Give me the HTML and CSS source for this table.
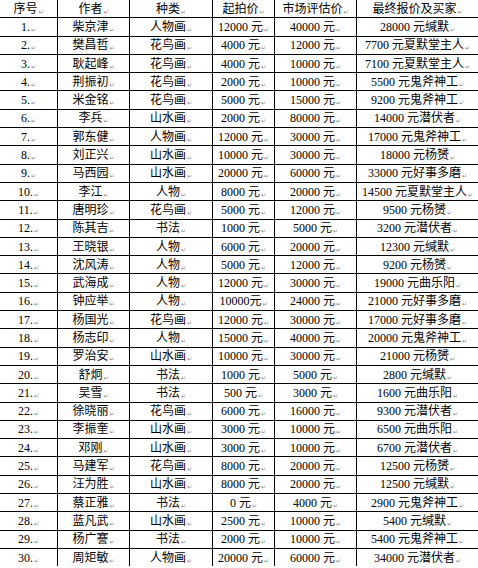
FILE: index.html
```html
<!DOCTYPE html>
<html lang="zh-CN">
<head>
<meta charset="utf-8">
<title>拍卖结果</title>
<link rel="stylesheet" href="styles.css">
</head>
<body>
<div class="sheet">
<div class="c">序号<i>↵</i></div><div class="c">作者<i>↵</i></div><div class="c">种类<i>↵</i></div><div class="c">起拍价<i>↵</i></div><div class="c">市场评估价<i>↵</i></div><div class="c">最终报价及买家<i>↵</i></div>
<div class="c">1.<i>↵</i></div><div class="c">柴京津<i>↵</i></div><div class="c">人物画<i>↵</i></div><div class="c">12000 元<i>↵</i></div><div class="c">40000 元<i>↵</i></div><div class="c">28000 元缄默<i>↵</i></div>
<div class="c">2.<i>↵</i></div><div class="c">樊昌哲<i>↵</i></div><div class="c">花鸟画<i>↵</i></div><div class="c">4000 元<i>↵</i></div><div class="c">12000 元<i>↵</i></div><div class="c">7700 元夏默堂主人<i>↵</i></div>
<div class="c">3.<i>↵</i></div><div class="c">耿起峰<i>↵</i></div><div class="c">花鸟画<i>↵</i></div><div class="c">4000 元<i>↵</i></div><div class="c">10000 元<i>↵</i></div><div class="c">7100 元夏默堂主人<i>↵</i></div>
<div class="c">4.<i>↵</i></div><div class="c">荆振初<i>↵</i></div><div class="c">花鸟画<i>↵</i></div><div class="c">2000 元<i>↵</i></div><div class="c">10000 元<i>↵</i></div><div class="c">5500 元鬼斧神工<i>↵</i></div>
<div class="c">5.<i>↵</i></div><div class="c">米金铭<i>↵</i></div><div class="c">花鸟画<i>↵</i></div><div class="c">5000 元<i>↵</i></div><div class="c">15000 元<i>↵</i></div><div class="c">9200 元鬼斧神工<i>↵</i></div>
<div class="c">6.<i>↵</i></div><div class="c">李兵<i>↵</i></div><div class="c">山水画<i>↵</i></div><div class="c">2000 元<i>↵</i></div><div class="c">80000 元<i>↵</i></div><div class="c">14000 元潜伏者<i>↵</i></div>
<div class="c">7.<i>↵</i></div><div class="c">郭东健<i>↵</i></div><div class="c">人物画<i>↵</i></div><div class="c">12000 元<i>↵</i></div><div class="c">30000 元<i>↵</i></div><div class="c">17000 元鬼斧神工<i>↵</i></div>
<div class="c">8.<i>↵</i></div><div class="c">刘正兴<i>↵</i></div><div class="c">山水画<i>↵</i></div><div class="c">10000 元<i>↵</i></div><div class="c">30000 元<i>↵</i></div><div class="c">18000 元杨赟<i>↵</i></div>
<div class="c">9.<i>↵</i></div><div class="c">马西园<i>↵</i></div><div class="c">山水画<i>↵</i></div><div class="c">20000 元<i>↵</i></div><div class="c">60000 元<i>↵</i></div><div class="c">33000 元好事多磨<i>↵</i></div>
<div class="c">10.<i>↵</i></div><div class="c">李江<i>↵</i></div><div class="c">人物<i>↵</i></div><div class="c">8000 元<i>↵</i></div><div class="c">20000 元<i>↵</i></div><div class="c">14500 元夏默堂主人<i>↵</i></div>
<div class="c">11.<i>↵</i></div><div class="c">唐明珍<i>↵</i></div><div class="c">花鸟画<i>↵</i></div><div class="c">5000 元<i>↵</i></div><div class="c">12000 元<i>↵</i></div><div class="c">9500 元杨赟<i>↵</i></div>
<div class="c">12.<i>↵</i></div><div class="c">陈其吉<i>↵</i></div><div class="c">书法<i>↵</i></div><div class="c">1000 元<i>↵</i></div><div class="c">5000 元<i>↵</i></div><div class="c">3200 元潜伏者<i>↵</i></div>
<div class="c">13.<i>↵</i></div><div class="c">王晓银<i>↵</i></div><div class="c">人物<i>↵</i></div><div class="c">6000 元<i>↵</i></div><div class="c">20000 元<i>↵</i></div><div class="c">12300 元缄默<i>↵</i></div>
<div class="c">14.<i>↵</i></div><div class="c">沈风涛<i>↵</i></div><div class="c">人物<i>↵</i></div><div class="c">5000 元<i>↵</i></div><div class="c">12000 元<i>↵</i></div><div class="c">9200 元杨赟<i>↵</i></div>
<div class="c">15.<i>↵</i></div><div class="c">武海成<i>↵</i></div><div class="c">人物<i>↵</i></div><div class="c">12000 元<i>↵</i></div><div class="c">30000 元<i>↵</i></div><div class="c">19000 元曲乐阳<i>↵</i></div>
<div class="c">16.<i>↵</i></div><div class="c">钟应举<i>↵</i></div><div class="c">人物<i>↵</i></div><div class="c">10000元<i>↵</i></div><div class="c">24000 元<i>↵</i></div><div class="c">21000 元好事多磨<i>↵</i></div>
<div class="c">17.<i>↵</i></div><div class="c">杨国光<i>↵</i></div><div class="c">花鸟画<i>↵</i></div><div class="c">12000 元<i>↵</i></div><div class="c">30000 元<i>↵</i></div><div class="c">17000 元好事多磨<i>↵</i></div>
<div class="c">18.<i>↵</i></div><div class="c">杨志印<i>↵</i></div><div class="c">人物<i>↵</i></div><div class="c">15000 元<i>↵</i></div><div class="c">40000 元<i>↵</i></div><div class="c">20000 元鬼斧神工<i>↵</i></div>
<div class="c">19.<i>↵</i></div><div class="c">罗治安<i>↵</i></div><div class="c">山水画<i>↵</i></div><div class="c">10000 元<i>↵</i></div><div class="c">30000 元<i>↵</i></div><div class="c">21000 元杨赟<i>↵</i></div>
<div class="c">20.<i>↵</i></div><div class="c">舒炯<i>↵</i></div><div class="c">书法<i>↵</i></div><div class="c">1000 元<i>↵</i></div><div class="c">5000 元<i>↵</i></div><div class="c">2800 元缄默<i>↵</i></div>
<div class="c">21.<i>↵</i></div><div class="c">吴雪<i>↵</i></div><div class="c">书法<i>↵</i></div><div class="c">500 元<i>↵</i></div><div class="c">3000 元<i>↵</i></div><div class="c">1600 元曲乐阳<i>↵</i></div>
<div class="c">22.<i>↵</i></div><div class="c">徐晓丽<i>↵</i></div><div class="c">花鸟画<i>↵</i></div><div class="c">6000 元<i>↵</i></div><div class="c">16000 元<i>↵</i></div><div class="c">9300 元潜伏者<i>↵</i></div>
<div class="c">23.<i>↵</i></div><div class="c">李振奎<i>↵</i></div><div class="c">山水画<i>↵</i></div><div class="c">3000 元<i>↵</i></div><div class="c">10000 元<i>↵</i></div><div class="c">6500 元曲乐阳<i>↵</i></div>
<div class="c">24.<i>↵</i></div><div class="c">邓刚<i>↵</i></div><div class="c">山水画<i>↵</i></div><div class="c">3000 元<i>↵</i></div><div class="c">10000 元<i>↵</i></div><div class="c">6700 元潜伏者<i>↵</i></div>
<div class="c">25.<i>↵</i></div><div class="c">马建军<i>↵</i></div><div class="c">花鸟画<i>↵</i></div><div class="c">8000 元<i>↵</i></div><div class="c">20000 元<i>↵</i></div><div class="c">12500 元杨赟<i>↵</i></div>
<div class="c">26.<i>↵</i></div><div class="c">汪为胜<i>↵</i></div><div class="c">山水画<i>↵</i></div><div class="c">8000 元<i>↵</i></div><div class="c">20000 元<i>↵</i></div><div class="c">12500 元缄默<i>↵</i></div>
<div class="c">27.<i>↵</i></div><div class="c">蔡正雅<i>↵</i></div><div class="c">书法<i>↵</i></div><div class="c">0 元<i>↵</i></div><div class="c">4000 元<i>↵</i></div><div class="c">2900 元鬼斧神工<i>↵</i></div>
<div class="c">28.<i>↵</i></div><div class="c">蓝凡武<i>↵</i></div><div class="c">山水画<i>↵</i></div><div class="c">2500 元<i>↵</i></div><div class="c">10000 元<i>↵</i></div><div class="c">5400 元缄默<i>↵</i></div>
<div class="c">29.<i>↵</i></div><div class="c">杨广謇<i>↵</i></div><div class="c">书法<i>↵</i></div><div class="c">2000 元<i>↵</i></div><div class="c">10000 元<i>↵</i></div><div class="c">5400 元鬼斧神工<i>↵</i></div>
<div class="c">30.<i>↵</i></div><div class="c">周矩敏<i>↵</i></div><div class="c">人物画<i>↵</i></div><div class="c">20000 元<i>↵</i></div><div class="c">60000 元<i>↵</i></div><div class="c">34000 元潜伏者<i>↵</i></div>
</div>
</body>
</html>
```
FILE: styles.css
```css
html, body {
  margin: 0;
  padding: 0;
  background: #fff;
  overflow: hidden;
}
.sheet {
  display: grid;
  grid-template-columns: 57px 71px 82px 61px 81px 1fr;
  grid-auto-rows: 17.31px;
  gap: 1px;
  background: #000;
  width: 478px;
  font-family: "Liberation Serif", "Noto Sans CJK SC", serif;
  font-size: 12px;
  line-height: 1;
  color: #000;
}
.c {
  background: #fff;
  display: flex;
  align-items: center;
  justify-content: center;
  white-space: nowrap;
}
.c i {
  font-style: normal;
  font-family: "DejaVu Sans", sans-serif;
  font-size: 6px;
  color: #888;
  margin-left: 1px;
  align-self: center;
  padding-top: 6px;
}
```
